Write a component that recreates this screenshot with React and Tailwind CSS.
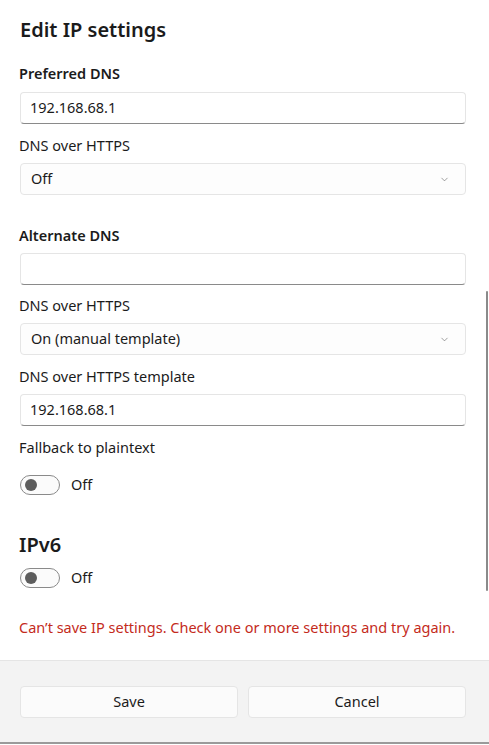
import { ChevronDown } from 'lucide-react'

const font = { fontFamily: '"Noto Sans", "Open Sans", sans-serif' }

function TextBox({ value, className = '' }) {
  return (
    <div
      className={`h-[32px] rounded-[4px] border border-[#e5e5e5] border-b-[#8a8a8a] bg-white px-[9px] flex items-center text-[14.5px] text-[#1b1b1b] ${className}`}
    >
      {value}
    </div>
  )
}

function Select({ value, className = '' }) {
  return (
    <div
      className={`h-[32px] rounded-[4px] border border-[#e5e5e5] bg-[#fdfdfd] pl-[10px] pr-[15px] flex items-center justify-between text-[14.5px] text-[#1b1b1b] ${className}`}
    >
      <span>{value}</span>
      <ChevronDown size={11} strokeWidth={1.3} className="text-[#5f5f5f]" />
    </div>
  )
}

function Toggle({ className = '' }) {
  return (
    <div className={`flex items-center h-[20px] ${className}`}>
      <div className="w-[40px] h-[20px] rounded-full border border-[#8a8a8a] bg-[#fbfbfb] flex items-center pl-[4px]">
        <div className="w-[12px] h-[12px] rounded-full bg-[#5d5d5d]" />
      </div>
      <span className="ml-[11px] text-[14.5px] text-[#1b1b1b]">Off</span>
    </div>
  )
}

export default function App() {
  return (
    <div className="h-[745px] w-[489px] bg-white flex flex-col relative overflow-hidden" style={font}>
      {/* Scrollable content */}
      <div className="flex-1 pl-[19px] pr-[23px] overflow-hidden">
        <div className="pl-[1px]">
          <h1 className="mt-[16px] h-[28px] leading-[28px] text-[20px] font-semibold text-[#1b1b1b]">Edit IP settings</h1>
        </div>

        <p className="mt-[19px] h-[20px] leading-[20px] text-[14.5px] font-semibold text-[#1b1b1b]">Preferred DNS</p>
        <TextBox value="192.168.68.1" className="mt-[9px] ml-[1px]" />

        <p className="mt-[11px] h-[20px] leading-[20px] text-[14.5px] text-[#1b1b1b]">DNS over HTTPS</p>
        <Select value="Off" className="mt-[8px] ml-[1px]" />

        <p className="mt-[30px] h-[20px] leading-[20px] text-[14.5px] font-semibold text-[#1b1b1b]">Alternate DNS</p>
        <TextBox value="" className="mt-[8px] ml-[1px]" />

        <p className="mt-[10px] h-[20px] leading-[20px] text-[14.5px] text-[#1b1b1b]">DNS over HTTPS</p>
        <Select value="On (manual template)" className="mt-[8px] ml-[1px]" />

        <p className="mt-[11px] h-[20px] leading-[20px] text-[14.5px] text-[#1b1b1b]">DNS over HTTPS template</p>
        <TextBox value="192.168.68.1" className="mt-[8px] ml-[1px]" />

        <p className="mt-[11px] h-[20px] leading-[20px] text-[14.5px] text-[#1b1b1b]">Fallback to plaintext</p>
        <Toggle className="mt-[18px] ml-[1px]" />

        <h2 className="mt-[36px] h-[28px] leading-[28px] text-[20px] font-semibold text-[#1b1b1b]">IPv6</h2>
        <Toggle className="mt-[9px] ml-[1px]" />

        <p className="mt-[29px] h-[20px] leading-[20px] text-[14.5px] text-[#c42b1c]">
          Can’t save IP settings. Check one or more settings and try again.
        </p>
      </div>

      {/* Scrollbar */}
      <div className="absolute left-[486px] top-[291px] w-[2px] h-[300px] rounded-full bg-[#8a8a8a]" />

      {/* Footer */}
      <div className="h-[85px] shrink-0 bg-[#f3f3f3] border-t border-[#e5e5e5] flex flex-col">
        <div className="flex-1 px-[20px] pr-[23px] pt-[25px] flex gap-[10px]">
          <button className="flex-1 h-[32px] rounded-[4px] border border-[#e5e5e5] bg-[#fbfbfb] text-[14.5px] text-[#1b1b1b]">Save</button>
          <button className="flex-1 h-[32px] rounded-[4px] border border-[#e5e5e5] bg-[#fbfbfb] text-[14.5px] text-[#1b1b1b]">Cancel</button>
        </div>
        <div className="h-[2px] bg-[#9a9a9a]" />
        <div className="h-[1px] bg-white" />
      </div>
    </div>
  )
}
